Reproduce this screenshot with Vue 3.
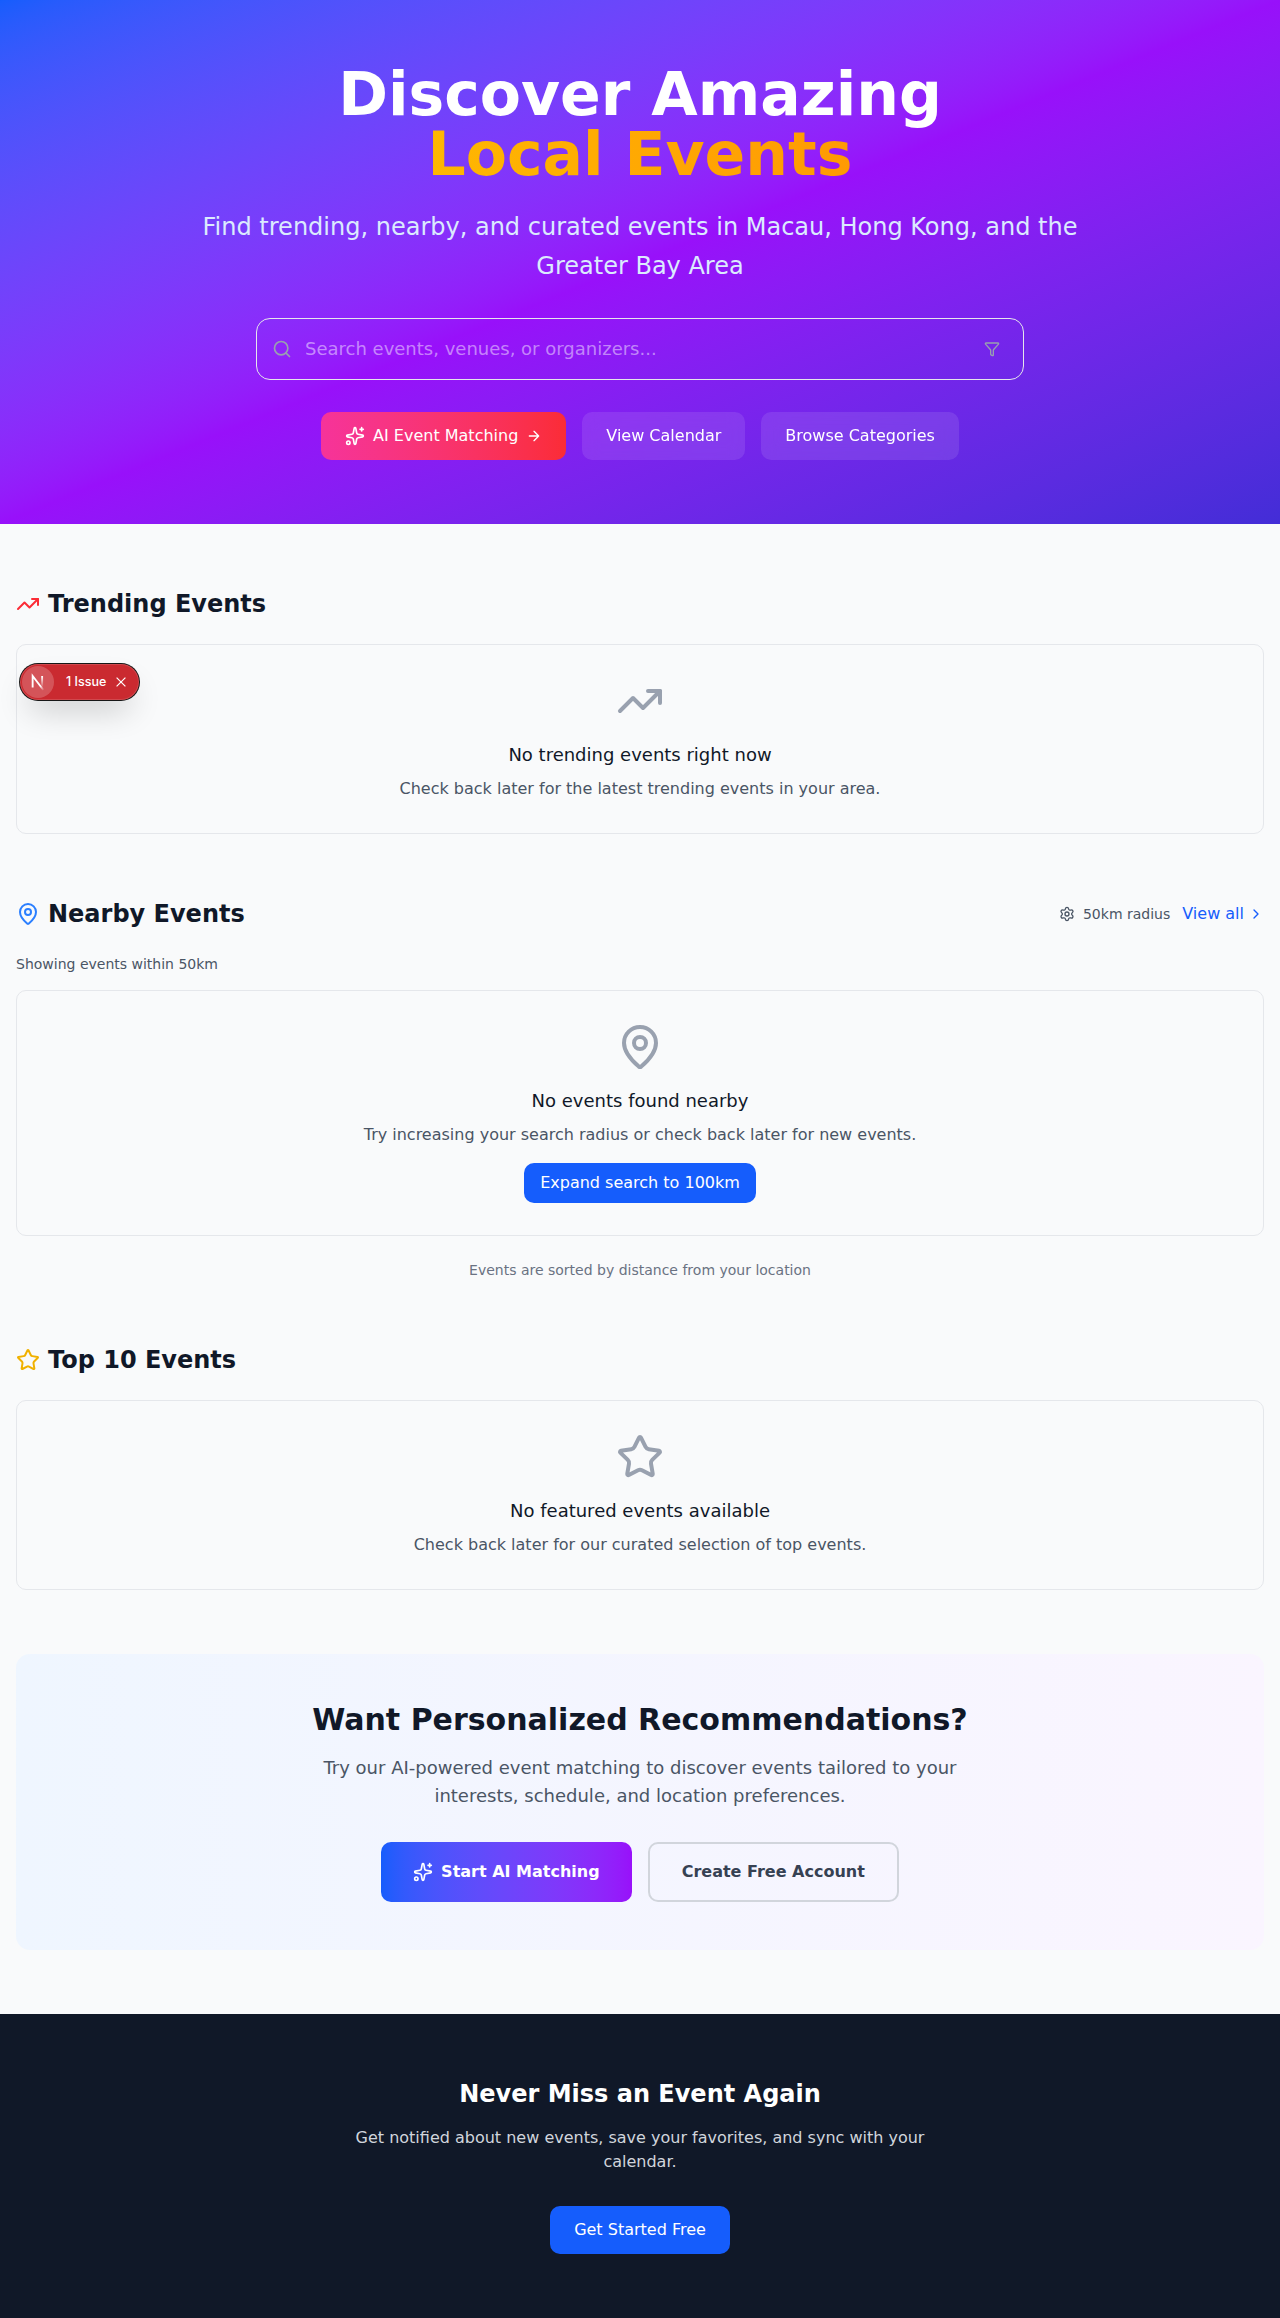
<script setup>
import { h, ref } from 'vue'

const query = ref('')

const shapes = {
  search: [['path', { d: 'm21 21-4.34-4.34' }], ['circle', { cx: 11, cy: 11, r: 8 }]],
  funnel: [['path', { d: 'M10 20a1 1 0 0 0 .553.895l2 1A1 1 0 0 0 14 21v-7a2 2 0 0 1 .517-1.341L21.74 4.67A1 1 0 0 0 21 3H3a1 1 0 0 0-.742 1.67l7.225 7.989A2 2 0 0 1 10 14z' }]],
  sparkles: [
    ['path', { d: 'M11.017 2.814a1 1 0 0 1 1.966 0l1.051 5.558a2 2 0 0 0 1.594 1.594l5.558 1.051a1 1 0 0 1 0 1.966l-5.558 1.051a2 2 0 0 0-1.594 1.594l-1.051 5.558a1 1 0 0 1-1.966 0l-1.051-5.558a2 2 0 0 0-1.594-1.594l-5.558-1.051a1 1 0 0 1 0-1.966l5.558-1.051a2 2 0 0 0 1.594-1.594z' }],
    ['path', { d: 'M20 2v4M22 4h-4' }],
    ['circle', { cx: 4, cy: 20, r: 2 }],
  ],
  arrow: [['path', { d: 'M5 12h14M12 5l7 7-7 7' }]],
  chevron: [['path', { d: 'm9 18 6-6-6-6' }]],
  trending: [['path', { d: 'M16 7h6v6' }], ['path', { d: 'm22 7-8.5 8.5-5-5L2 17' }]],
  pin: [
    ['path', { d: 'M20 10c0 4.993-5.539 10.193-7.399 11.799a1 1 0 0 1-1.202 0C9.539 20.193 4 14.993 4 10a8 8 0 0 1 16 0' }],
    ['circle', { cx: 12, cy: 10, r: 3 }],
  ],
  star: [['path', { d: 'M11.525 2.295a.53.53 0 0 1 .95 0l2.31 4.679a2.123 2.123 0 0 0 1.595 1.16l5.166.756a.53.53 0 0 1 .294.904l-3.736 3.638a2.123 2.123 0 0 0-.611 1.878l.882 5.14a.53.53 0 0 1-.771.56l-4.618-2.428a2.122 2.122 0 0 0-1.973 0L6.396 21.01a.53.53 0 0 1-.77-.56l.881-5.139a2.122 2.122 0 0 0-.611-1.879L2.16 9.795a.53.53 0 0 1 .294-.906l5.165-.755a2.122 2.122 0 0 0 1.597-1.16z' }]],
  settings: [
    ['path', { d: 'M9.671 4.136a2.34 2.34 0 0 1 4.659 0 2.34 2.34 0 0 0 3.319 1.915 2.34 2.34 0 0 1 2.33 4.033 2.34 2.34 0 0 0 0 3.831 2.34 2.34 0 0 1-2.33 4.033 2.34 2.34 0 0 0-3.319 1.915 2.34 2.34 0 0 1-4.659 0 2.34 2.34 0 0 0-3.32-1.915 2.34 2.34 0 0 1-2.33-4.033 2.34 2.34 0 0 0 0-3.831A2.34 2.34 0 0 1 6.35 6.051a2.34 2.34 0 0 0 3.319-1.915' }],
    ['circle', { cx: 12, cy: 12, r: 3 }],
  ],
}

const Icon = ({ name, size }) =>
  h(
    'svg',
    {
      width: size,
      height: size,
      viewBox: '0 0 24 24',
      fill: 'none',
      stroke: 'currentColor',
      'stroke-width': 2,
      'stroke-linecap': 'round',
      'stroke-linejoin': 'round',
      'aria-hidden': 'true',
    },
    shapes[name].map(([tag, attrs]) => h(tag, attrs)),
  )
Icon.props = ['name', 'size']

const sections = [
  {
    id: 'trending',
    title: 'Trending Events',
    icon: 'trending',
    emptyTitle: 'No trending events right now',
    emptyText: 'Check back later for the latest trending events in your area.',
  },
  {
    id: 'nearby',
    title: 'Nearby Events',
    icon: 'pin',
    radius: 50,
    emptyTitle: 'No events found nearby',
    emptyText: 'Try increasing your search radius or check back later for new events.',
    action: 'Expand search to 100km',
    note: 'Events are sorted by distance from your location',
  },
  {
    id: 'top',
    title: 'Top 10 Events',
    icon: 'star',
    emptyTitle: 'No featured events available',
    emptyText: 'Check back later for our curated selection of top events.',
  },
]
</script>

<template>
  <div class="page">
    <header class="hero">
      <div class="hero-inner">
        <h1>Discover Amazing<span class="accent">Local Events</span></h1>
        <p class="lead">Find trending, nearby, and curated events in Macau, Hong Kong, and the Greater Bay Area</p>
        <div class="search">
          <Icon name="search" :size="20" class="search-icon" />
          <input v-model="query" type="text" placeholder="Search events, venues, or organizers..." />
          <button class="filter" aria-label="Filters"><Icon name="funnel" :size="16" /></button>
        </div>
        <div class="hero-actions">
          <a class="btn match"><Icon name="sparkles" :size="20" />AI Event Matching<Icon name="arrow" :size="16" /></a>
          <a class="btn glass">View Calendar</a>
          <a class="btn glass">Browse Categories</a>
        </div>
      </div>
    </header>

    <main>
      <section v-for="s in sections" :key="s.id" :class="s.id">
        <div class="section-head">
          <h2><Icon :name="s.icon" :size="24" class="head-icon" />{{ s.title }}</h2>
          <div v-if="s.radius" class="tools">
            <button class="radius"><Icon name="settings" :size="16" />{{ s.radius }}km radius</button>
            <a class="view-all">View all<Icon name="chevron" :size="16" /></a>
          </div>
        </div>
        <p v-if="s.radius" class="showing">Showing events within {{ s.radius }}km</p>
        <div class="empty">
          <Icon :name="s.icon" :size="48" class="empty-icon" />
          <h3>{{ s.emptyTitle }}</h3>
          <p>{{ s.emptyText }}</p>
          <button v-if="s.action" class="expand">{{ s.action }}</button>
        </div>
        <p v-if="s.note" class="note">{{ s.note }}</p>
      </section>

      <section class="cta">
        <h2>Want Personalized Recommendations?</h2>
        <p>Try our AI-powered event matching to discover events tailored to your interests, schedule, and location preferences.</p>
        <div class="cta-actions">
          <a class="start"><Icon name="sparkles" :size="20" />Start AI Matching</a>
          <a class="create">Create Free Account</a>
        </div>
      </section>
    </main>

    <footer>
      <h2>Never Miss an Event Again</h2>
      <p>Get notified about new events, save your favorites, and sync with your calendar.</p>
      <a class="btn get-started">Get Started Free</a>
    </footer>

    <div class="devtools">
      <span class="mark">
        <svg width="32" height="32" viewBox="0 0 32 32" fill="none">
          <defs>
            <linearGradient id="diag" x1="9.956" y1="11.123" x2="15.478" y2="17.967" gradientUnits="userSpaceOnUse">
              <stop stop-color="#fff" /><stop offset=".604" stop-color="#fff" stop-opacity="0" />
            </linearGradient>
            <linearGradient id="stem" x1="11.822" y1="1.4" x2="11.791" y2="12.5" gradientUnits="userSpaceOnUse">
              <stop stop-color="#fff" /><stop offset="1" stop-color="#fff" stop-opacity="0" />
            </linearGradient>
          </defs>
          <g transform="translate(8.3 9)" stroke-width="1.86">
            <path d="M13.3 15.2 2.34 1V12.6" stroke="url(#diag)" />
            <path d="M11.825 1V12.6" stroke="url(#stem)" />
          </g>
        </svg>
      </span>
      <span class="issues">1 Issue</span>
      <svg class="close" width="12" height="12" viewBox="0 0 12 12" fill="none" stroke="#fff" stroke-width="1.2">
        <path d="M1.6 1.6l8.8 8.8M10.4 1.6l-8.8 8.8" />
      </svg>
    </div>
  </div>
</template>

<style>
body {
  margin: 0;
  background: #f9fafb;
}
</style>

<style scoped>
.page {
  position: relative;
  font-family: "DejaVu Sans", sans-serif;
  font-size: 16px;
  line-height: 24px;
  color: #101828;
}
h1, h2, h3, p { margin: 0; }
svg { display: block; flex-shrink: 0; }
button {
  font: inherit;
  color: inherit;
  border: 0;
  background: none;
  padding: 0;
}

.hero {
  padding: 64px 16px;
  background: linear-gradient(to bottom right in oklab, #155dfc 0%, #9810fa 50%, #432dd7 100%);
  color: #fff;
  text-align: center;
}
.hero-inner {
  max-width: 896px;
  margin: 0 auto;
}
h1 {
  font-size: 60px;
  line-height: 60px;
  font-weight: 700;
}
.accent {
  display: block;
  background: linear-gradient(to right in oklab, #fdc700, #ff8904);
  -webkit-background-clip: text;
  background-clip: text;
  color: transparent;
}
.lead {
  margin-top: 24px;
  font-size: 24px;
  line-height: 39px;
  color: #dbeafe;
}
.search {
  position: relative;
  max-width: 768px;
  margin: 32px auto;
  color: #99a1af;
}
.search input {
  display: block;
  width: 100%;
  box-sizing: border-box;
  border: 1px solid #e5e7eb;
  border-radius: 14px;
  outline: 0;
  padding: 15px 48px 17px;
  background: transparent;
  font-family: "DejaVu Sans", sans-serif;
  font-size: 18px;
  line-height: 28px;
  height: 62px;
  color: #fff;
}
.search input::placeholder { color: rgba(255, 255, 255, 0.48); opacity: 1; }
.search-icon {
  position: absolute;
  left: 16px;
  top: 21px;
}
.filter {
  position: absolute;
  right: 16px;
  top: 15px;
  padding: 8px;
}
.hero-actions {
  display: flex;
  justify-content: center;
  gap: 16px;
}
.btn {
  display: inline-flex;
  align-items: center;
  gap: 8px;
  padding: 12px 24px;
  border-radius: 10px;
  color: #fff;
}
.match { background: linear-gradient(to right in oklab, #f6339a, #fb2c36); }
.glass { background: rgba(255, 255, 255, 0.1); backdrop-filter: blur(8px); }

main {
  display: flex;
  flex-direction: column;
  gap: 64px;
  padding: 64px 16px;
}
.section-head {
  display: flex;
  align-items: center;
  justify-content: space-between;
  margin-bottom: 24px;
}
.section-head h2 {
  display: flex;
  align-items: center;
  gap: 8px;
  font-size: 24px;
  line-height: 32px;
  font-weight: 700;
}
.trending .head-icon { color: #fb2c36; }
.nearby .head-icon { color: #2b7fff; }
.top .head-icon { color: #f0b100; }
.tools {
  display: flex;
  align-items: center;
  gap: 12px;
}
.radius {
  display: flex;
  align-items: center;
  gap: 8px;
  font-size: 14px;
  line-height: 20px;
  color: #4a5565;
}
.view-all {
  display: flex;
  align-items: center;
  gap: 4px;
  color: #155dfc;
}
.showing {
  margin-bottom: 16px;
  font-size: 14px;
  line-height: 20px;
  color: #4a5565;
}
.empty {
  display: flex;
  flex-direction: column;
  align-items: center;
  padding: 32px;
  border: 1px solid #e5e7eb;
  border-radius: 10px;
  text-align: center;
}
.empty-icon { color: #99a1af; margin-bottom: 16px; }
.empty h3 {
  margin-bottom: 8px;
  font-size: 18px;
  line-height: 28px;
  font-weight: 500;
}
.empty p { color: #4a5565; }
.expand {
  margin-top: 16px;
  padding: 8px 16px;
  border-radius: 10px;
  background: #155dfc;
  color: #fff;
}
.note {
  margin-top: 24px;
  font-size: 14px;
  line-height: 20px;
  color: #6a7282;
  text-align: center;
}

.cta {
  padding: 48px;
  border-radius: 14px;
  background: linear-gradient(to right in oklab, #eff6ff, #faf5ff);
  text-align: center;
}
.cta h2 {
  font-size: 30px;
  line-height: 36px;
  font-weight: 700;
}
.cta p {
  max-width: 672px;
  margin: 16px auto 32px;
  font-size: 18px;
  line-height: 28px;
  color: #4a5565;
}
.cta-actions {
  display: flex;
  justify-content: center;
  gap: 16px;
  font-weight: 600;
}
.start, .create {
  display: inline-flex;
  align-items: center;
  gap: 8px;
  padding: 16px 32px;
  border-radius: 10px;
}
.start {
  background: linear-gradient(to right in oklab, #155dfc, #9810fa);
  color: #fff;
}
.create {
  border: 2px solid #d1d5dc;
  color: #364153;
}

footer {
  padding: 64px 16px;
  background: #101828;
  text-align: center;
  display: flex;
  flex-direction: column;
  align-items: center;
}
footer h2 {
  font-size: 24px;
  line-height: 32px;
  font-weight: 700;
  color: #fff;
}
footer p {
  max-width: 576px;
  margin: 16px 0 32px;
  color: #d1d5dc;
}
.get-started { background: #155dfc; }

/* Floating badge over the page */
.devtools {
  position: absolute;
  left: 20px;
  top: 664px;
  width: 119px;
  height: 36px;
  box-sizing: border-box;
  padding: 2px;
  display: flex;
  align-items: center;
  border-radius: 18px;
  background: #ca2a30;
  color: #fff;
  box-shadow: 0 0 0 1px #171717, inset 0 0 0 1px rgba(255, 255, 255, 0.14), 0 16px 32px -8px rgba(0, 0, 0, 0.24);
}
.mark {
  width: 32px;
  height: 32px;
  border-radius: 50%;
  background: rgba(255, 255, 255, 0.2);
}
.issues {
  margin-left: 12px;
  width: 41px;
  font: 500 12.5px/16px Inter, sans-serif;
  white-space: nowrap;
}
.close { margin-left: 8px; }
</style>
